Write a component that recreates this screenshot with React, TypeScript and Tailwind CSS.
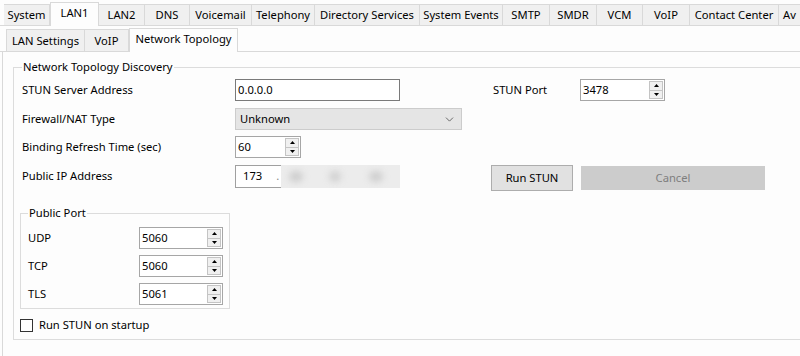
import React from "react";
import { ChevronDown } from "lucide-react";

function Tri({ up }: { up?: boolean }) {
  return (
    <svg width="5" height="3" viewBox="0 0 5 3">
      {up ? <polygon points="0,3 5,3 2.5,0" fill="#000" /> : <polygon points="0,0 5,0 2.5,3" fill="#000" />}
    </svg>
  );
}

function Spin({ value, className }: { value: string; className: string }) {
  return (
    <div className={`flex h-[22px] border border-[#a6a6a6] bg-white ${className}`}>
      <div className="flex-1 pl-[2px] leading-[20px]">{value}</div>
      <div className="flex flex-col w-[15px] py-[1px] pr-[1px]">
        <div className="flex-1 border border-[#c4c4c4] bg-[#f0f0f0] flex items-center justify-center">
          <Tri up />
        </div>
        <div className="flex-1 border border-[#c4c4c4] border-t-0 bg-[#f0f0f0] flex items-center justify-center">
          <Tri />
        </div>
      </div>
    </div>
  );
}

const topTabs: { t: string; w: string; sel?: boolean }[] = [
  { t: "System", w: "w-[46px]" },
  { t: "LAN1", w: "w-[49px]", sel: true },
  { t: "LAN2", w: "w-[46px]" },
  { t: "DNS", w: "w-[45px]" },
  { t: "Voicemail", w: "w-[62px]" },
  { t: "Telephony", w: "w-[63px]" },
  { t: "Directory Services", w: "w-[105px]" },
  { t: "System Events", w: "w-[83px]" },
  { t: "SMTP", w: "w-[47px]" },
  { t: "SMDR", w: "w-[47px]" },
  { t: "VCM", w: "w-[46px]" },
  { t: "VoIP", w: "w-[47px]" },
  { t: "Contact Center", w: "w-[89px]" },
  { t: "Av", w: "w-[60px]" },
];

const subTabs: { t: string; w: string; sel?: boolean }[] = [
  { t: "LAN Settings", w: "w-[79px]" },
  { t: "VoIP", w: "w-[44px]" },
  { t: "Network Topology", w: "w-[109px]", sel: true },
];

export default function App() {
  return (
    <div className="w-[800px] h-[356px] overflow-hidden bg-[#fdfdfd] text-[11.2px] text-black font-['Noto_Sans',sans-serif]">
      {/* top tabs */}
      <div className="flex items-end h-[26px] pl-[4px] border-b border-[#d9d9d9] whitespace-nowrap">
        {topTabs.map((tab) =>
          tab.sel ? (
            <div
              key={tab.t}
              className={`${tab.w} shrink-0 h-[24px] -mb-[1px] bg-[#fdfdfd] border border-b-0 border-[#d9d9d9] flex items-start justify-center pt-[2px] leading-[16px]`}
            >
              {tab.t}
            </div>
          ) : (
            <div
              key={tab.t}
              className={`${tab.w} shrink-0 h-[21px] bg-[#f0f0f0] border-t border-r border-[#d9d9d9] flex items-center last:justify-start last:pl-[4px] justify-center leading-[16px] overflow-hidden`}
            >
              {tab.t}
            </div>
          )
        )}
      </div>

      {/* sub tabs */}
      <div className="flex items-end h-[26px] pl-[6px] border-b border-[#d9d9d9] whitespace-nowrap">
        {subTabs.map((tab) =>
          tab.sel ? (
            <div
              key={tab.t}
              className={`${tab.w} shrink-0 h-[24px] -mb-[1px] bg-[#fdfdfd] border border-b-0 border-[#d9d9d9] flex items-start justify-center pt-[2px] leading-[16px]`}
            >
              {tab.t}
            </div>
          ) : (
            <div
              key={tab.t}
              className={`${tab.w} shrink-0 h-[22px] bg-[#f0f0f0] border-t border-r first:border-l border-[#d9d9d9] flex items-center justify-center leading-[16px]`}
            >
              {tab.t}
            </div>
          )
        )}
      </div>

      {/* panel */}
      <div className="ml-[2px] h-[310px] border-l border-[#d9d9d9] pt-[7px] pl-[10px]">
        <fieldset className="w-[800px] border border-[#dcdcdc] pl-[6px] pb-[7px]">
          <legend className="ml-[2px] px-[1px] leading-[16px]">Network Topology Discovery</legend>

          {/* row 1 */}
          <div className="flex items-center h-[22px] mt-[4px] ml-[2px]">
            <div className="w-[213px] shrink-0">STUN Server Address</div>
            <div className="w-[165px] h-[22px] border border-[#7a7a7a] bg-white pl-[2px] leading-[20px]">0.0.0.0</div>
            <div className="w-[87px] ml-[93px] shrink-0">STUN Port</div>
            <Spin value="3478" className="w-[85px]" />
          </div>

          {/* row 2 */}
          <div className="flex items-center h-[22px] mt-[7px] ml-[2px]">
            <div className="w-[213px] shrink-0">Firewall/NAT Type</div>
            <div className="w-[227px] h-[22px] border border-[#cccccc] bg-[#e5e5e5] pl-[4px] flex items-center justify-between pr-[5px]">
              <span>Unknown</span>
              <ChevronDown size={13} strokeWidth={1.4} color="#444" />
            </div>
          </div>

          {/* row 3 */}
          <div className="flex items-center h-[22px] mt-[6px] ml-[2px]">
            <div className="w-[213px] shrink-0">Binding Refresh Time (sec)</div>
            <Spin value="60" className="w-[66px]" />
          </div>

          {/* row 4 */}
          <div className="flex items-start h-[26px] mt-[7px] ml-[2px]">
            <div className="w-[213px] shrink-0 h-[23px] flex items-center">Public IP Address</div>
            <div className="w-[165px] h-[23px] flex">
              <div className="w-[46px] h-[23px] border border-[#a0a0a0] border-r-0 bg-white flex items-center pl-[7px] gap-[14px]">
                <span>173</span>
                <span className="text-[#888]">.</span>
              </div>
              <div className="relative flex-1 h-[23px] bg-[#ececec] overflow-hidden">
                <div className="absolute left-[8px] top-[6px] w-[14px] h-[11px] rounded-full bg-[#cfcfcf] blur-[3px]" />
                <div className="absolute left-[48px] top-[6px] w-[12px] h-[11px] rounded-full bg-[#d2d2d2] blur-[3px]" />
                <div className="absolute left-[88px] top-[6px] w-[14px] h-[11px] rounded-full bg-[#d0d0d0] blur-[3px]" />
              </div>
            </div>
            <button className="ml-[91px] w-[82px] h-[26px] border border-[#adadad] bg-[#e1e1e1] leading-[24px]">Run STUN</button>
            <button className="ml-[8px] mt-[1px] w-[184px] h-[24px] bg-[#cccccc] text-[#7e7e7e] leading-[24px]">Cancel</button>
          </div>

          {/* public port */}
          <fieldset className="mt-[14px] w-[210px] border border-[#dcdcdc] pl-[7px] pr-[6px] pb-[3px]">
            <legend className="px-[1px] leading-[16px]">Public Port</legend>
            <div className="flex items-center h-[22px] mt-[6px]">
              <div className="w-[111px] shrink-0">UDP</div>
              <Spin value="5060" className="w-[84px]" />
            </div>
            <div className="flex items-center h-[22px] mt-[6px]">
              <div className="w-[111px] shrink-0">TCP</div>
              <Spin value="5060" className="w-[84px]" />
            </div>
            <div className="flex items-center h-[22px] mt-[6px]">
              <div className="w-[111px] shrink-0">TLS</div>
              <Spin value="5061" className="w-[84px]" />
            </div>
          </fieldset>

          {/* checkbox */}
          <div className="flex items-center mt-[10px] h-[13px] gap-[6px]">
            <div className="w-[13px] h-[13px] border border-[#333] bg-white" />
            <span>Run STUN on startup</span>
          </div>
        </fieldset>
      </div>
    </div>
  );
}
